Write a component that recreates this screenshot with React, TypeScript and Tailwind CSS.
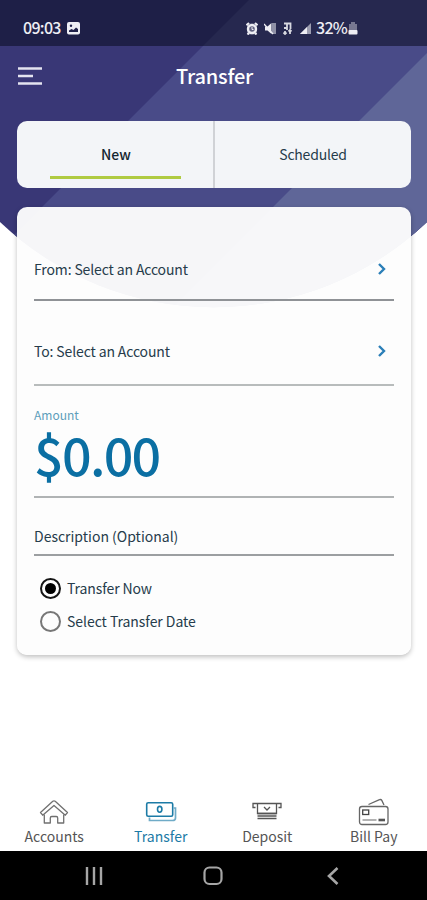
import React from "react";

interface NavItemType {
    label: string;
    isSelected: boolean;
    icon: React.ReactNode;
}

const HomeIcon = () => (
    <svg width="30" height="26" viewBox="0 0 30 26" fill="none" stroke="#707070" strokeWidth="1.3" strokeLinejoin="round">
        <path d="M1.500 13.500 13.800 2.300q1.200-.9 2.400 0L28.500 13.500l-2.200 2.700L15 6.500 3.700 16.200z" />
        <path d="M5.300 15.500v8.500h6v-5q0-1.500 1.500-1.500h4.400q1.500 0 1.500 1.500v5h6v-8.500" />
    </svg>
);

const TransferIcon = () => (
    <svg width="32" height="22" viewBox="0 0 32 22" fill="none" stroke="#1c7ba6">
        <rect x="1.700" y="1.700" width="26" height="13.500" rx="1.500" strokeWidth="1.600" />
        <ellipse cx="14.700" cy="8.300" rx="2.200" ry="2.900" strokeWidth="1.600" />
        <path d="M4.500 16.500v3h23q3 0 3-2.500V7h-2" strokeWidth="1.700" stroke="#6fabc7" />
    </svg>
);

const DepositIcon = () => (
    <svg width="30" height="20" viewBox="0 0 30 20" fill="none" stroke="#555" strokeWidth="1.300">
        <path d="M3.500 5.500H1V1.500h28v4h-2.500" />
        <path d="M5.500 2v9.500h19V2M12 5l3 3 3-3" />
        <path d="M5.500 11.500h19M5.500 14h19M5.500 16.500h19" strokeWidth="1.400" />
    </svg>
);

const BillPayIcon = () => (
    <svg width="32" height="28" viewBox="0 0 32 28" fill="none" stroke="#666" strokeWidth="1.300">
        <rect x="1.500" y="8.500" width="28.500" height="18" rx="2.500" />
        <path d="M10.500 6.500 21.500 1.700q1.500-.7 2.300.7L26 7" />
        <rect x="4.700" y="12" width="6" height="4.500" stroke="#444" />
        <path d="M4.500 22h14" strokeWidth="1.800" stroke="#aaa" />
        <path d="M20.500 22h6.500" strokeWidth="2.600" stroke="#555" />
    </svg>
);

const navItems: NavItemType[] = [
    { label: "Accounts", isSelected: false, icon: <HomeIcon /> },
    { label: "Transfer", isSelected: true, icon: <TransferIcon /> },
    { label: "Deposit", isSelected: false, icon: <DepositIcon /> },
    { label: "Bill Pay", isSelected: false, icon: <BillPayIcon /> },
];

// curved header with the two diagonal bands
const HeaderBackground = () => (
    <svg className="absolute left-0 top-0" width="427" height="310" viewBox="0 0 427 310">
        <defs>
            <clipPath id="curve">
                <path d="M0 0H427V222A310 310 0 0 1 0 222z" />
            </clipPath>
        </defs>
        <g clipPath="url(#curve)">
            <rect width="427" height="310" fill="#393776" />
            <path d="M249 0H427V310H-61z" fill="#494b88" />
            <path d="M480 0V310H170z" fill="#5f6698" />
        </g>
    </svg>
);

const StatusBar = () => (
    <div className="flex h-[46px] items-center bg-[#0a0d20]/55 pl-[23px] pt-[10px] text-[16px] font-medium text-[#eeeef4]">
        <span className="-mt-[2px] w-[44px] tracking-[-0.7px]">09:03</span>
        <svg width="13" height="13" viewBox="0 0 13 13">
            <rect width="13" height="12.500" rx="2" fill="#eeeef4" />
            <circle cx="4" cy="3.700" r="1.200" fill="#20214a" />
            <path d="M2 10V8.500l2.500-1.500 2 1L9 5.500l2 1.500v3z" fill="#20214a" />
        </svg>
        <div className="ml-[166px] flex items-center gap-[6px]">
            <svg width="12" height="13" viewBox="0 0 12 13">
                <path d="M1 1.500h10v11H1z" fill="#eeeef4" opacity="0.300" />
                <circle cx="6" cy="7" r="4" fill="none" stroke="#eeeef4" strokeWidth="2.400" />
                <path d="M.5 3.200 3 1M11.500 3.200 9 1M1.500 12.500l1.500-1.500M10.500 12.500 9 11" stroke="#eeeef4" strokeWidth="2" />
                <path d="M6 5v2.500h1.500" stroke="#eeeef4" strokeWidth="1" fill="none" />
            </svg>
            <svg width="12" height="13" viewBox="0 0 12 13">
                <path d="M1 4.500h2.500L7.500 1v11L3.500 8.500H1z" fill="#eeeef4" />
                <path d="M9 1v11M11 1v11" stroke="#b3b4c4" strokeWidth="1.500" />
                <path d="M0 2l9 10" stroke="#eeeef4" strokeWidth="1.300" />
            </svg>
            <svg width="12" height="13" viewBox="0 0 12 13" fill="none" stroke="#d7d8e0" strokeWidth="1.800">
                <path d="M2 1.500h6.500V7M5 2v6M2 6h3M3 9v3M1.500 10.500 3 12l1.500-1.500M8 12V8M6.500 9.500 8 8l1.500 1.500" />
            </svg>
            <svg width="12" height="13" viewBox="0 0 12 13">
                <path d="M11 1v11H0z" fill="#9c9db0" />
                <path d="M7 5v7H0z" fill="#eeeef4" />
            </svg>
        </div>
        <span className="-mt-[2px] ml-[4px] w-[32px] tracking-[-0.7px]">32%</span>
        <svg width="10" height="13" viewBox="0 0 10 13">
            <path d="M1 2h2V0h4v2h2v7H1z" fill="#777891" />
            <rect x="0.500" y="8" width="9" height="4.500" rx="1" fill="#eeeef4" />
        </svg>
    </div>
);

const AccountRow = ({ label, className }: { label: string; className: string }) => (
    <button className={`flex w-full justify-between border-b-2 text-left tracking-[-0.13px] ${className}`}>
        <span>{label}</span>
        <svg className="mr-[7px] mt-[3px]" width="10" height="14" viewBox="0 0 10 14" fill="none" stroke="#2b7fb8" strokeWidth="2.400">
            <path d="M2 2l5 5-5 5" />
        </svg>
    </button>
);

const App: React.FC = () => {
    return (
        <div className="relative flex h-[900px] w-[427px] flex-col overflow-hidden bg-white font-['Noto_Sans_CJK_SC','Noto_Sans',sans-serif] text-[14px] leading-[20px] text-[#263c4b]">
            <HeaderBackground />

            <div className="relative flex flex-1 flex-col">
                <StatusBar />

                <header className="flex h-[75px] items-start pl-[18px] pt-[18px]">
                    <svg className="mt-[2px]" width="24" height="20" viewBox="0 0 24 20" stroke="#e4e4f0" strokeWidth="2.400">
                        <path d="M0 2.500h24M0 10h15M0 17.500h24" />
                    </svg>
                    <h1 className="ml-[134px] text-[20px] font-medium leading-[24px] tracking-[-0.2px] text-white">Transfer</h1>
                </header>

                <div className="ml-[17px] mr-4 flex h-[67px] rounded-[10px] bg-[#f3f5f8]">
                    <button className="flex w-[198px] flex-col items-center border-r-2 border-[#d0d2d6] pt-[23px] text-[#14252f]">
                        <span className="pl-[2px] font-medium">New</span>
                        <span className="mt-[12px] h-[3px] w-[131px] bg-[#b0cb42]" />
                    </button>
                    <button className="flex flex-1 justify-center pt-[23px] tracking-[-0.2px]">Scheduled</button>
                </div>

                <main className="ml-[17px] mr-4 mt-[19px] h-[448px] rounded-[10px] bg-[#fdfdfd]/96 px-[17px] shadow-[0_2px_5px_rgba(0,0,0,0.25)]">
                    <AccountRow label="From: Select an Account" className="h-[94px] border-[#8f9296] pt-[52px]" />
                    <AccountRow label="To: Select an Account" className="h-[85px] border-[#b8bcbc] pt-[40px]" />
                    <div className="h-[112px] border-b-2 border-[#b0b3b4] pt-[20px]">
                        <div className="text-[12px] leading-[18px] text-[#5e9dbb]">Amount</div>
                        <div className="mt-[8px] text-[52px] font-medium leading-[44px] tracking-[-1.7px] text-[#0b6fa3]">$0.00</div>
                    </div>
                    <div className="h-[58px] border-b-2 border-[#9c9fa1] pt-[28px]">Description (Optional)</div>
                    <label className="mt-[22px] flex h-[21px] items-center gap-[6px] pl-[6px]">
                        <span className="flex h-[21px] w-[21px] items-center justify-center rounded-full border-2 border-[#151515]">
                            <span className="h-[11px] w-[11px] rounded-full bg-black" />
                        </span>
                        <span className="-mt-[2px] tracking-[-0.1px]">Transfer Now</span>
                    </label>
                    <label className="mt-[12px] flex h-[21px] items-center gap-[6px] pl-[6px]">
                        <span className="h-[21px] w-[21px] rounded-full border-2 border-[#777]" />
                        <span className="-mt-[1px] tracking-[-0.05px]">Select Transfer Date</span>
                    </label>
                </main>
            </div>

            <nav className="relative flex h-[56px] pl-[1px] text-[#555]">
                {navItems.map((item, index) => (
                    <button
                        key={index}
                        className={`flex w-1/4 flex-col items-center ${item.isSelected ? "text-[#1c7ba6]" : ""}`}
                    >
                        <span className="flex h-[31px] items-center pt-[2px]">{item.icon}</span>
                        <span className="text-[14px]">{item.label}</span>
                    </button>
                ))}
            </nav>

            <footer className="flex h-[49px] items-center bg-black pl-[85px]">
                <svg width="18" height="18" viewBox="0 0 18 18" stroke="#a6a6a6" strokeWidth="2.400">
                    <path d="M2 0v18M9 0v18M16 0v18" />
                </svg>
                <svg className="ml-[100px]" width="20" height="20" viewBox="0 0 20 20" fill="none" stroke="#a6a6a6" strokeWidth="2.200">
                    <rect x="1.500" y="1.500" width="17" height="16.500" rx="5" />
                </svg>
                <svg className="ml-[104px]" width="12" height="18" viewBox="0 0 12 18" fill="none" stroke="#a6a6a6" strokeWidth="2.600">
                    <path d="M10.500 1 2 9l8.500 8" />
                </svg>
            </footer>
        </div>
    );
};

export default App;
